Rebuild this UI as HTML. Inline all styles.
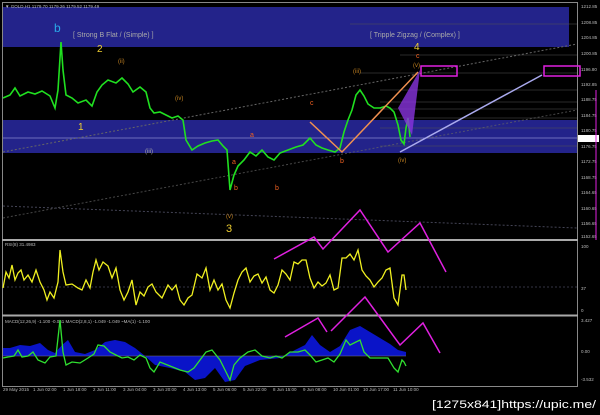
<!DOCTYPE html>
<html><head><style>
html,body{margin:0;padding:0;background:#000;width:600px;height:415px;overflow:hidden}
svg{display:block;font-family:"Liberation Sans",sans-serif}
</style></head><body>
<svg width="600" height="415" viewBox="0 0 600 415" xmlns="http://www.w3.org/2000/svg">
<rect width="600" height="415" fill="#000"/>
<rect x="2.5" y="2.5" width="575" height="384" fill="none" stroke="#888" stroke-width="1"/>
<line x1="2" y1="240" x2="578" y2="240" stroke="#aaa" stroke-width="2"/>
<line x1="2" y1="315.5" x2="578" y2="315.5" stroke="#aaa" stroke-width="2"/>
<rect x="3" y="7" width="566" height="40" fill="#23238a"/>
<rect x="3" y="120" width="574" height="33" fill="#23238a"/>
<line x1="3" y1="138" x2="577" y2="138" stroke="#8888cc" stroke-width="0.7"/>
<g stroke="#555" stroke-width="0.6">
<line x1="350" y1="24" x2="577" y2="24"/><line x1="400" y1="55" x2="577" y2="55"/>
<line x1="360" y1="73" x2="577" y2="73"/><line x1="380" y1="90" x2="577" y2="90"/>
<line x1="380" y1="102" x2="577" y2="102"/><line x1="380" y1="109" x2="577" y2="109"/>
<line x1="380" y1="118" x2="577" y2="118"/><line x1="380" y1="128" x2="577" y2="128"/>
<line x1="380" y1="146" x2="577" y2="146"/>
</g>
<line x1="3" y1="152" x2="577" y2="44" stroke="#666" stroke-dasharray="2,2"/>
<line x1="3" y1="218" x2="577" y2="110" stroke="#666" stroke-dasharray="2,2" opacity=".7"/>
<line x1="3" y1="206" x2="577" y2="228" stroke="#445" stroke-dasharray="2,2"/>
<text x="73" y="37" fill="#aaa" font-size="7">[ Strong B Flat / (Simple) ]</text>
<text x="370" y="37" fill="#aaa" font-size="7">[ Tripple Zigzag / (Complex) ]</text>
<text x="54" y="32" fill="#29a8e8" font-size="12">b</text>
<text x="97" y="52" fill="#f0d030" font-size="10">2</text>
<text x="78" y="130" fill="#f0d030" font-size="10">1</text>
<text x="226" y="232" fill="#f0d030" font-size="11">3</text>
<text x="226" y="218" fill="#c08020" font-size="6">(v)</text>
<text x="414" y="50" fill="#f0d030" font-size="10">4</text>
<text x="416" y="58" fill="#f06020" font-size="7">c</text>
<text x="413" y="67" fill="#c08020" font-size="6">(v)</text>
<text x="353" y="73" fill="#c08020" font-size="6">(iii)</text>
<text x="398" y="162" fill="#c08020" font-size="6">(iv)</text>
<text x="340" y="163" fill="#f06020" font-size="7">b</text>
<text x="310" y="105" fill="#f06020" font-size="7">c</text>
<text x="232" y="164" fill="#f06020" font-size="7">a</text>
<text x="234" y="190" fill="#f06020" font-size="7">b</text>
<text x="250" y="137" fill="#f06020" font-size="7">a</text>
<text x="275" y="190" fill="#f06020" font-size="7">b</text>
<text x="145" y="153" fill="#aaa" font-size="6">(iii)</text>
<text x="175" y="100" fill="#c08020" font-size="6">(iv)</text>
<text x="118" y="63" fill="#c08020" font-size="6">(ii)</text>
<rect x="421" y="66" width="36" height="10" fill="none" stroke="#e020e0" stroke-width="1.5"/>
<rect x="544" y="66" width="36" height="10" fill="none" stroke="#e020e0" stroke-width="1.5"/>
<g fill="#bbb" font-size="4.5">
<text x="581" y="8">1212.85</text><text x="581" y="24">1208.85</text><text x="581" y="39">1204.85</text>
<text x="581" y="55">1200.85</text><text x="581" y="71">1196.80</text><text x="581" y="86">1192.85</text>
<text x="581" y="101">1188.75</text><text x="581" y="117">1184.75</text><text x="581" y="132">1180.75</text>
<text x="581" y="148">1176.75</text><text x="581" y="163">1172.75</text><text x="581" y="179">1168.75</text>
<text x="581" y="194">1164.65</text><text x="581" y="210">1160.65</text><text x="581" y="225">1156.65</text>
<text x="581" y="238">1152.65</text><text x="581" y="248">100</text><text x="581" y="290">37</text>
<text x="581" y="312">0</text><text x="581" y="322">3.427</text><text x="581" y="353">0.00</text>
<text x="581" y="381">-3.532</text>
<text x="5" y="8" font-size="4.5">▼ GOLD,H1  1179.70 1179.26 1179.52 1179.49</text>
<text x="5" y="246">RSI(8) 31.4983</text>
<text x="5" y="323">MACD(12,26,9) -1.100 -0.051  MACD(2,8,1) -1.049 -1.049  ~MA(1) -1.100</text>
</g>
<rect x="578" y="135" width="21" height="7" fill="#fff"/>
<line x1="596" y1="90" x2="596" y2="240" stroke="#e020e0" stroke-width="1"/>
<g fill="#bbb" font-size="4.5">
<text x="3" y="391">29 May 2015</text><text x="33" y="391">1 Jun 02:00</text><text x="63" y="391">1 Jun 18:00</text>
<text x="93" y="391">2 Jun 11:00</text><text x="123" y="391">3 Jun 04:00</text><text x="153" y="391">3 Jun 20:00</text>
<text x="183" y="391">4 Jun 13:00</text><text x="213" y="391">5 Jun 06:00</text><text x="243" y="391">5 Jun 22:00</text>
<text x="273" y="391">8 Jun 15:00</text><text x="303" y="391">9 Jun 08:00</text><text x="333" y="391">10 Jun 01:00</text>
<text x="363" y="391">10 Jun 17:00</text><text x="393" y="391">11 Jun 10:00</text>
</g>
<polyline fill="none" stroke="#20e020" stroke-width="1.6" points="3,98 10,95 15,88 20,96 28,92 35,94 42,91 50,96 55,108 58,90 61,42 63,70 66,95 72,98 78,103 86,100 92,106 97,92 102,85 108,80 116,83 122,78 128,84 133,92 140,87 146,92 150,108 154,113 160,112 166,115 172,118 178,116 183,120 186,140 192,150 198,146 205,143 212,141 218,140 223,146 227,150 230,190 234,175 238,166 244,160 250,152 256,156 262,150 268,157 274,160 280,153 288,150 296,147 303,145 310,138 316,145 322,148 328,150 335,152 340,148 344,132 348,120 352,110 356,95 360,90 364,96 368,104 374,108 380,108 386,106 390,108 394,112 398,125 401,140 404,144 406,128 408,118 410,137"/>
<polyline fill="none" stroke="#f09050" stroke-width="1.5" points="310,122 342,152 418,72"/>
<polygon points="398,108 420,70 412,135" fill="#8833dd" opacity=".8"/>
<line x1="400" y1="152" x2="542" y2="75" stroke="#aaaaee" stroke-width="1.5"/>
<line x1="3" y1="287" x2="577" y2="287" stroke="#334" stroke-dasharray="2,2"/>
<polyline fill="none" stroke="#f0f020" stroke-width="1.3" points="3,288 6,272 9,278 12,265 15,280 18,273 21,270 24,280 28,275 32,282 36,270 40,282 44,290 47,300 50,292 54,298 58,282 60,250 63,272 66,285 72,284 78,288 82,290 86,280 90,288 93,272 96,260 99,270 103,262 108,266 112,278 116,268 120,290 124,300 128,292 132,280 136,305 140,292 144,296 148,287 152,284 156,292 162,298 168,285 172,290 176,285 180,300 184,305 188,298 192,295 197,274 202,278 206,268 210,290 214,280 218,290 222,284 226,300 230,308 234,293 238,280 242,272 246,268 250,282 254,276 258,274 262,283 266,277 270,290 274,293 278,285 282,270 286,274 290,280 294,262 298,264 302,260 306,260 310,278 314,288 318,282 322,286 326,283 330,275 334,290 338,288 342,258 346,258 350,254 354,260 358,250 362,270 366,276 370,280 374,287 378,282 382,278 386,270 390,268 394,298 398,305 402,275 404,275 406,290"/>
<path fill="#0a14c8" d="M3,348 L10,348 L20,345 L30,346 L40,343 L48,350 L55,353 L62,345 L68,340 L75,352 L85,354 L95,350 L105,342 L115,340 L125,342 L135,348 L145,356 L155,365 L170,368 L185,372 L195,380 L205,378 L215,368 L225,382 L235,380 L245,366 L260,360 L280,358 L295,350 L305,345 L312,335 L320,345 L330,352 L340,346 L350,330 L360,326 L370,332 L380,338 L390,344 L398,350 L406,352 L406,356 L3,356 Z"/>
<line x1="3" y1="356" x2="406" y2="356" stroke="#778" stroke-width="0.5"/>
<polyline fill="none" stroke="#30e030" stroke-width="1.3" points="3,358 8,357 14,356 18,350 22,357 28,356 33,352 38,360 45,363 50,357 56,356 60,320 63,352 66,365 72,362 80,363 88,358 94,354 98,345 104,346 110,352 116,355 122,358 128,357 134,360 140,355 146,358 150,368 154,372 160,362 170,366 180,370 188,372 194,368 200,360 206,352 212,350 220,360 226,372 230,380 234,365 240,358 248,352 255,350 262,356 270,358 276,356 282,358 290,352 298,352 305,350 310,355 316,362 322,360 328,358 334,362 340,354 346,340 350,345 356,342 360,340 364,352 370,358 380,358 388,358 394,368 398,372 402,360 404,362 406,366"/>
<g fill="none" stroke="#e020e0" stroke-width="1.5">
<polyline points="274,259 314,237 323,249 360,210 388,252 420,223 446,272"/>
<polyline points="285,337 318,318 327,332"/>
<polyline points="331,331 365,297 400,345 423,323 440,353"/>
</g>
<text x="432" y="408" fill="#fff" font-size="11" font-family="Liberation Sans Narrow, Liberation Sans, sans-serif" textLength="164" lengthAdjust="spacingAndGlyphs">[1275x841]https://upic.me/</text>
</svg>
</body></html>
